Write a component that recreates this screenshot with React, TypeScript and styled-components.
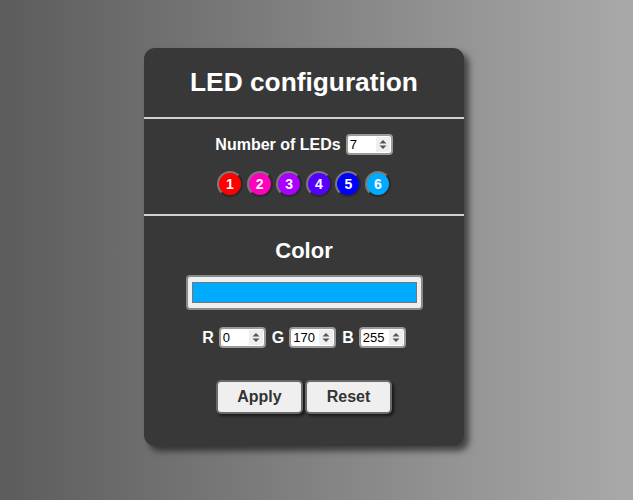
import React, { useState } from "react";
import styled, { createGlobalStyle } from "styled-components";

const Global = createGlobalStyle`
  html, body { margin: 0; padding: 0; height: 100%; }
  body {
    background: linear-gradient(to right, #5c5c5c, #a9a9a9);
    font-family: "Liberation Sans", Arial, sans-serif;
    min-height: 500px;
  }
`;

const Page = styled.div`
  display: flex;
  justify-content: flex-start;
  padding-top: 48px;
  padding-left: 144px;
`;

const Card = styled.div`
  width: 320px;
  background: #383838;
  border-radius: 11px;
  box-shadow: 5px 5px 6px rgba(0, 0, 0, 0.55);
  color: #fff;
  display: flex;
  flex-direction: column;
  align-items: center;
  padding-bottom: 32px;
`;

const Title = styled.h1`
  margin: 19px 0 0;
  font-size: 26.3px;
  line-height: 30px;
  font-weight: bold;
`;

const Rule = styled.div<{ $top: number }>`
  align-self: stretch;
  height: 2px;
  background: #d0d0d0;
  margin-top: ${(p) => p.$top}px;
`;

const Row = styled.div<{ $top: number; $gap?: number }>`
  display: flex;
  align-items: center;
  justify-content: center;
  gap: ${(p) => p.$gap ?? 5}px;
  margin-top: ${(p) => p.$top}px;
`;

const Label = styled.label`
  font-size: 16px;
  font-weight: bold;
  line-height: 20px;
`;

const Field = styled.div`
  box-sizing: border-box;
  width: 47px;
  height: 21px;
  border: 2px solid #9a9a9a;
  border-radius: 4px;
  background: #fff;
  display: flex;
  align-items: stretch;
  overflow: hidden;
`;

const NumInput = styled.input`
  flex: 1;
  min-width: 0;
  border: none;
  outline: none;
  background: transparent;
  font-family: "Liberation Sans", Arial, sans-serif;
  font-size: 13px;
  padding: 0 0 0 2px;
  color: #000;
  -moz-appearance: textfield;
  &::-webkit-inner-spin-button,
  &::-webkit-outer-spin-button {
    -webkit-appearance: none;
    margin: 0;
  }
`;

const Spin = styled.div`
  width: 14px;
  background: #efefef;
  display: flex;
  align-items: center;
  justify-content: center;
  margin: 1px 1px 1px 0;
`;

function NumberField({ value, onChange }: { value: number; onChange: (n: number) => void }) {
  return (
    <Field>
      <NumInput type="number" value={value} onChange={(e) => onChange(+e.target.value)} />
      <Spin>
        <svg width="8" height="11" viewBox="0 0 8 11">
          <path d="M0.5 4.5 L4 1 L7.5 4.5 Z" fill="#555" />
          <path d="M0.5 6.5 L4 10 L7.5 6.5 Z" fill="#555" />
        </svg>
      </Spin>
    </Field>
  );
}

const Group = styled.div`
  display: flex;
  align-items: center;
  gap: 5px;
`;

const Led = styled.button<{ $c: string }>`
  box-sizing: border-box;
  width: 26px;
  height: 26px;
  border-radius: 50%;
  background: ${(p) => p.$c};
  border: 2px solid;
  border-color: #7a7a7a #2a2a2a #2a2a2a #7a7a7a;
  color: #fff;
  font-family: "Liberation Sans", Arial, sans-serif;
  font-weight: bold;
  font-size: 14px;
  padding: 0;
  display: flex;
  align-items: center;
  justify-content: center;
`;

const SubTitle = styled.h2`
  margin: 22px 0 0;
  font-size: 22px;
  line-height: 26px;
  font-weight: bold;
`;

const Swatch = styled.div`
  box-sizing: border-box;
  margin-top: 11px;
  width: 237px;
  height: 35px;
  background: #efefef;
  border: 2px solid #8a8a8a;
  border-radius: 4px;
  padding: 5px 4px;
  display: flex;
`;

const SwatchFill = styled.div<{ $c: string }>`
  flex: 1;
  background: ${(p) => p.$c};
  border: 1px solid #777;
`;

const Buttons = styled.div`
  display: flex;
  gap: 2px;
  margin-top: 32px;
`;

const Btn = styled.button`
  box-sizing: border-box;
  width: 87px;
  height: 34px;
  margin: 0;
  background: #efefef;
  border: 2px solid #6a6a6a;
  border-radius: 5px;
  box-shadow: 2px 2px 3px rgba(0, 0, 0, 0.6);
  color: #333;
  font-family: "Liberation Sans", Arial, sans-serif;
  font-weight: bold;
  font-size: 16px;
`;

const leds = ["#ff0000", "#ff00bb", "#aa00ff", "#5500ff", "#0000ff", "#00aaff"];

export default function App() {
  const [count, setCount] = useState(7);
  const [r, setR] = useState(0);
  const [g, setG] = useState(170);
  const [b, setB] = useState(255);
  return (
    <>
      <Global />
      <Page>
        <Card>
          <Title>LED configuration</Title>
          <Rule $top={20} />
          <Row $top={15}>
            <Label>Number of LEDs</Label>
            <NumberField value={count} onChange={setCount} />
          </Row>
          <Row $top={16} $gap={3.6}>
            {leds.map((c, i) => (
              <Led key={i} $c={c}>{i + 1}</Led>
            ))}
          </Row>
          <Rule $top={17} />
          <SubTitle>Color</SubTitle>
          <Swatch>
            <SwatchFill $c={`rgb(${r},${g},${b})`} />
          </Swatch>
          <Row $top={17} $gap={6}>
            <Group>
              <Label>R</Label>
              <NumberField value={r} onChange={setR} />
            </Group>
            <Group>
              <Label>G</Label>
              <NumberField value={g} onChange={setG} />
            </Group>
            <Group>
              <Label>B</Label>
              <NumberField value={b} onChange={setB} />
            </Group>
          </Row>
          <Buttons>
            <Btn>Apply</Btn>
            <Btn>Reset</Btn>
          </Buttons>
        </Card>
      </Page>
    </>
  );
}
